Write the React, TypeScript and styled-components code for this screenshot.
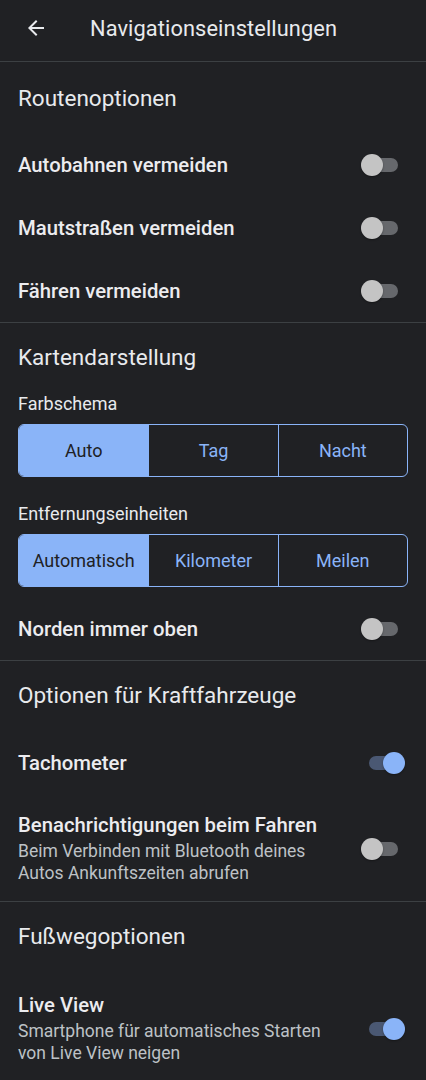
import React, { useState } from "react";
import styled, { createGlobalStyle } from "styled-components";

const Global = createGlobalStyle`
  html, body { margin: 0; padding: 0; background: #202124; }
  body { font-family: Roboto, "Noto Sans", Arial, sans-serif; color: #e8eaed; -webkit-font-smoothing: antialiased; }
  * { box-sizing: border-box; }
`;

const Page = styled.div`
  width: 426px;
  min-height: 1080px;
  background: #202124;
  overflow: hidden;
`;

const Header = styled.header`
  height: 62px;
  display: flex;
  align-items: center;
  padding-left: 24px;
  gap: 42px;
  border-bottom: 1px solid #3c4043;
`;

const BackButton = styled.button`
  width: 24px;
  height: 24px;
  padding: 0;
  border: 0;
  background: none;
  color: #e8eaed;
  display: flex;
  align-items: center;
  justify-content: center;
  margin-top: -5px;
`;

const Title = styled.h1`
  margin: 0;
  margin-top: -5px;
  font-size: 21.8px;
  font-weight: 400;
  color: #e8eaed;
  letter-spacing: 0.1px;
`;

const Section = styled.section<{ $last?: boolean }>`
  padding: 0 18px 0 18px;
  border-bottom: ${(p) => (p.$last ? "none" : "1px solid #3c4043")};
`;

const SectionTitle = styled.h2<{ $top: number; $bottom: number }>`
  margin: 0;
  padding-top: ${(p) => p.$top}px;
  padding-bottom: ${(p) => p.$bottom}px;
  line-height: 28px;
  font-size: 22.5px;
  font-weight: 400;
  color: #e8eaed;
`;

const Row = styled.div<{ $two?: boolean; $mt?: number }>`
  display: flex;
  align-items: center;
  justify-content: space-between;
  min-height: 63px;
  margin-top: ${(p) => p.$mt ?? 0}px;
  padding: ${(p) => (p.$two ? "19px 3px 17px 0" : "0 3px 0 0")};
`;

const RowText = styled.div`
  display: flex;
  flex-direction: column;
  gap: 3px;
`;

const RowTitle = styled.div`
  font-size: 20.3px;
  font-weight: 500;
  line-height: 24px;
  color: #ececef;
`;

const RowSub = styled.div`
  font-size: 17.5px;
  line-height: 22px;
  color: #bdc1c6;
  max-width: 320px;
`;

const Label = styled.div<{ $top: number }>`
  font-size: 18px;
  line-height: 22px;
  color: #e8eaed;
  margin-top: ${(p) => p.$top}px;
  margin-bottom: 9px;
`;

const Segmented = styled.div`
  display: grid;
  grid-template-columns: repeat(3, 1fr);
  height: 53px;
  border: 1px solid #8ab4f8;
  border-radius: 6px;
  overflow: hidden;
`;

const Segment = styled.button<{ $active?: boolean }>`
  border: 0;
  border-left: 1px solid #8ab4f8;
  &:first-child { border-left: 0; }
  background: ${(p) => (p.$active ? "#8ab4f8" : "transparent")};
  color: ${(p) => (p.$active ? "#202124" : "#8ab4f8")};
  font-family: Roboto, sans-serif;
  font-size: 18px;
  font-weight: 400;
  padding: 0;
`;

const SwitchBox = styled.button`
  position: relative;
  width: 44px;
  height: 24px;
  padding: 0;
  border: 0;
  background: none;
  flex-shrink: 0;
`;

const Track = styled.span<{ $on?: boolean }>`
  position: absolute;
  top: 5px;
  left: ${(p) => (p.$on ? 8 : 6)}px;
  width: 31px;
  height: 14px;
  border-radius: 7px;
  background: ${(p) => (p.$on ? "#4a5873" : "#66686c")};
`;

const Thumb = styled.span<{ $on?: boolean }>`
  position: absolute;
  top: 1px;
  left: ${(p) => (p.$on ? 22 : 0)}px;
  width: 22px;
  height: 22px;
  border-radius: 50%;
  background: ${(p) => (p.$on ? "#8ab4f8" : "#c4c4c4")};
  box-shadow: 0 1px 2px rgba(0, 0, 0, 0.35);
`;

function Switch({ on }: { on?: boolean }) {
  const [v, setV] = useState(!!on);
  return (
    <SwitchBox onClick={() => setV(!v)} aria-pressed={v}>
      <Track $on={v} />
      <Thumb $on={v} />
    </SwitchBox>
  );
}

function SettingRow({ title, sub, on, mt }: { title: string; sub?: string; on?: boolean; mt?: number }) {
  return (
    <Row $two={!!sub} $mt={mt}>
      <RowText>
        <RowTitle>{title}</RowTitle>
        {sub && <RowSub>{sub}</RowSub>}
      </RowText>
      <Switch on={on} />
    </Row>
  );
}

function Seg({ items, active }: { items: string[]; active: number }) {
  const [a, setA] = useState(active);
  return (
    <Segmented>
      {items.map((t, i) => (
        <Segment key={t} $active={i === a} onClick={() => setA(i)}>
          {t}
        </Segment>
      ))}
    </Segmented>
  );
}

export default function App() {
  return (
    <Page>
      <Global />
      <Header>
        <BackButton aria-label="Zurück">
          <svg width="24" height="24" viewBox="0 0 24 24" fill="currentColor">
            <path d="M20 11H7.83l5.59-5.59L12 4l-8 8 8 8 1.41-1.41L7.83 13H20v-2z" />
          </svg>
        </BackButton>
        <Title>Navigationseinstellungen</Title>
      </Header>

      <Section>
        <SectionTitle $top={22} $bottom={21}>Routenoptionen</SectionTitle>
        <SettingRow title="Autobahnen vermeiden" />
        <SettingRow title="Mautstraßen vermeiden" />
        <SettingRow title="Fähren vermeiden" />
      </Section>

      <Section>
        <SectionTitle $top={20} $bottom={22}>Kartendarstellung</SectionTitle>
        <Label $top={0}>Farbschema</Label>
        <Seg items={["Auto", "Tag", "Nacht"]} active={0} />
        <Label $top={26}>Entfernungseinheiten</Label>
        <Seg items={["Automatisch", "Kilometer", "Meilen"]} active={0} />
        <SettingRow title="Norden immer oben" mt={10} />
      </Section>

      <Section>
        <SectionTitle $top={20} $bottom={22}>Optionen für Kraftfahrzeuge</SectionTitle>
        <SettingRow title="Tachometer" on />
        <SettingRow
          title="Benachrichtigungen beim Fahren"
          sub="Beim Verbinden mit Bluetooth deines Autos Ankunftszeiten abrufen"
        />
      </Section>

      <Section $last>
        <SectionTitle $top={20} $bottom={24}>Fußwegoptionen</SectionTitle>
        <SettingRow
          title="Live View"
          sub="Smartphone für automatisches Starten von Live View neigen"
          on
        />
      </Section>
    </Page>
  );
}
